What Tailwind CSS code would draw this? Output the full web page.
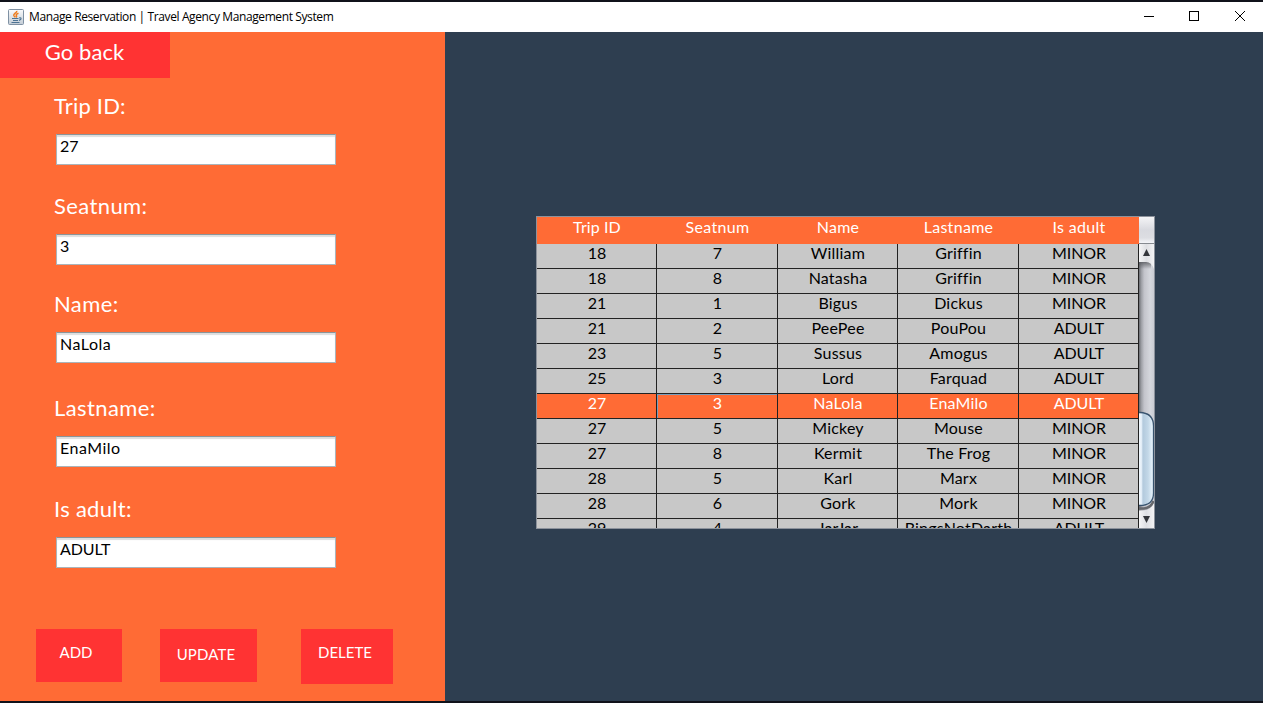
<!DOCTYPE html>
<html lang="en">
<head>
<meta charset="utf-8">
<title>Manage Reservation | Travel Agency Management System</title>
<script src="https://cdn.jsdelivr.net/npm/@tailwindcss/browser@4"></script>
</head>
<body class="w-[1263px] h-[703px] overflow-hidden bg-[#10121a] pt-[2px] font-[Lato,sans-serif] [font-variant-ligatures:none]">
<div class="flex h-[699px] flex-col">
  <header class="flex h-[30px] shrink-0 items-center bg-white text-black">
    <svg class="ml-2 h-4 w-4 shrink-0" viewBox="0 0 16 16">
      <defs><linearGradient id="ic" x1="0" y1="0" x2="0" y2="1"><stop offset="0" stop-color="#fafbfc"/><stop offset="1" stop-color="#c3ccd5"/></linearGradient></defs>
      <rect x=".5" y=".5" width="15" height="15" rx="1" fill="url(#ic)" stroke="#7f91a3"/>
      <path d="M8.800 1.800C9.200 3.800 5 4.600 5.800 6.500Q6.200 7.300 7.300 8.300M10.500 4.300C8 5.200 7.800 6 8.500 6.700Q9 7.500 8 8.500" fill="none" stroke="#ee7d1e" stroke-width="1.500"/>
      <path d="M4 9.500H10.500M5 11.500H10M3.500 13.500H11.500M11 9Q13.800 8.300 12.800 10.300L11 11.500" fill="none" stroke="#4d7393" stroke-width="1.100"/>
    </svg>
    <h1 class="ml-[5px] flex-1 whitespace-nowrap font-['Open_Sans',sans-serif] text-[12px] leading-4 tracking-[-0.39px]">Manage Reservation | Travel Agency Management System</h1>
    <svg class="h-[30px] w-[138px] shrink-0" viewBox="0 0 138 30" fill="none" stroke="#000" shape-rendering="crispEdges">
      <path d="M19 14.500H29"/><rect x="64.500" y="9.500" width="9" height="9"/><path shape-rendering="auto" d="M110 9L120 19M120 9L110 19"/>
    </svg>
  </header>
  <div class="flex min-h-0 flex-1">
    <aside class="flex w-[445px] shrink-0 flex-col bg-[#ff6b35] text-white">
      <button class="h-[46px] w-[170px] shrink-0 bg-[#ff3333] pb-[6px] pr-[1px] text-[22px] leading-[26px] tracking-[0.1px]"><span>Go back</span></button>
      <form class="flex flex-col pl-[54px] text-[22px] leading-[26px] tracking-[0.4px]">
        <label class="mt-[15px] h-[41px] tracking-[0.2px]"><span>Trip ID:</span></label>
        <div class="ml-[2px] h-[31px] w-[280px] border border-[#aab4ba] border-t-[#8a9499] bg-white pl-[3px] text-[16px] leading-[22px] tracking-normal text-black shadow-[inset_0_2px_1px_#dddddd]"><span>27</span></div>
        <label class="mt-[28px] h-[41px]"><span>Seatnum:</span></label>
        <div class="ml-[2px] h-[31px] w-[280px] border border-[#aab4ba] border-t-[#8a9499] bg-white pl-[3px] text-[16px] leading-[22px] tracking-normal text-black shadow-[inset_0_2px_1px_#dddddd]"><span>3</span></div>
        <label class="mt-[26px] h-[41px]"><span>Name:</span></label>
        <div class="ml-[2px] h-[31px] w-[280px] border border-[#aab4ba] border-t-[#8a9499] bg-white pl-[3px] text-[16px] leading-[22px] tracking-[0.5px] text-black shadow-[inset_0_2px_1px_#dddddd]"><span>NaLola</span></div>
        <label class="mt-[32px] h-[41px]"><span>Lastname:</span></label>
        <div class="ml-[2px] h-[31px] w-[280px] border border-[#aab4ba] border-t-[#8a9499] bg-white pl-[3px] text-[16px] leading-[22px] tracking-[0.5px] text-black shadow-[inset_0_2px_1px_#dddddd]"><span>EnaMilo</span></div>
        <label class="mt-[29px] h-[41px] tracking-[0.3px]"><span>Is adult:</span></label>
        <div class="ml-[2px] h-[31px] w-[280px] border border-[#aab4ba] border-t-[#8a9499] bg-white pl-[3px] text-[16px] leading-[22px] tracking-[-0.1px] text-black shadow-[inset_0_2px_1px_#dddddd]"><span>ADULT</span></div>
      </form>
      <div class="mt-[61px] flex items-start pl-9 text-[15px] leading-5">
        <button class="h-[53px] w-[86px] bg-[#ff3333] pb-[7px] pr-[6px]"><span>ADD</span></button>
        <button class="ml-[38px] h-[53px] w-[97px] bg-[#ff3333] pb-[3px] pr-[5px] tracking-[0.15px]"><span>UPDATE</span></button>
        <button class="ml-[44px] h-[55px] w-[92px] bg-[#ff3333] pb-[9px] pr-[4px]"><span>DELETE</span></button>
      </div>
    </aside>
    <main class="flex-1 bg-[#2e3e50] pl-[91px] pt-[184px]">
      <div class="flex h-[313px] w-[619px] overflow-hidden border border-[#8c929c] text-[16px]">
        <div id="table" class="w-[602px] shrink-0 bg-[#c8c8c8] text-black">
          <div class="grid h-[27px] grid-cols-[120px_121px_120px_121px_120px] bg-[#ff6b35] text-center leading-[20px] tracking-[0.3px] text-white">
            <span class="tracking-[0.1px]">Trip ID</span><span>Seatnum</span><span>Name</span><span>Lastname</span><span>Is adult</span>
          </div>
          <div id="rows"></div>
        </div>
        <svg class="h-[311px] w-[15px] shrink-0" viewBox="0 0 15 311">
          <defs>
            <linearGradient id="hd" x1="0" y1="0" x2="0" y2="1"><stop offset="0" stop-color="#f4f4f6"/><stop offset=".5" stop-color="#d8d9df"/><stop offset=".8" stop-color="#dcdde2"/><stop offset="1" stop-color="#f4f5f9"/></linearGradient>
            <linearGradient id="tr"><stop offset="0" stop-color="#6d6f74"/><stop offset=".15" stop-color="#9c9ea4"/><stop offset=".35" stop-color="#c3c4cb"/><stop offset=".75" stop-color="#d5d7dd"/><stop offset="1" stop-color="#caccd3"/></linearGradient>
            <linearGradient id="th"><stop offset="0" stop-color="#f5fafe"/><stop offset=".22" stop-color="#e5eff8"/><stop offset=".32" stop-color="#b3cadd"/><stop offset=".65" stop-color="#c3d8e8"/><stop offset="1" stop-color="#eef8ff"/></linearGradient>
            <linearGradient id="bt"><stop offset="0" stop-color="#f5f5f6"/><stop offset=".5" stop-color="#dedfe3"/><stop offset="1" stop-color="#f3f3f5"/></linearGradient>
            <linearGradient id="sh" x1="0" y1="0" x2="0" y2="1"><stop offset="0" stop-color="#55575c" stop-opacity=".8"/><stop offset="1" stop-color="#55575c" stop-opacity="0"/></linearGradient>
          </defs>
          <rect width="15" height="311" fill="url(#tr)"/>
          <rect width="15" height="26" fill="url(#hd)"/><path d="M0 26.500H15" stroke="#85898f"/>
          <rect y="45" width="12" height="7" fill="url(#sh)"/>
          <path d="M0 27H15V52Q12.500 45 7 45H0Z" fill="url(#bt)"/>
          <path d="M7.500 32L11 39H4Z" fill="#33353a"/>
          <path d="M-1 195.500H1Q14.500 196 14.500 209V276Q14.500 288.500 1 288.500H-1Z" fill="url(#th)" stroke="#38536e" stroke-width="1.300"/>
          <path d="M0 293.500H5Q12 293 15 285V311H0Z" fill="url(#bt)"/>
          <path d="M0 291.500H5Q12 291 14.500 284" fill="none" stroke="#66686d" stroke-width="2.500"/>
          <path d="M4 299H11L7.500 306Z" fill="#33353a"/>
        </svg>
      </div>
    </main>
  </div>
</div>
<template id="row">
  <div class="grid h-[25px] grid-cols-[120px_121px_120px_121px_120px] text-center leading-[18px]"></div>
</template>
<script>
const data = [
  ['18','7','William','Griffin','MINOR'],
  ['18','8','Natasha','Griffin','MINOR'],
  ['21','1','Bigus','Dickus','MINOR'],
  ['21','2','PeePee','PouPou','ADULT'],
  ['23','5','Sussus','Amogus','ADULT'],
  ['25','3','Lord','Farquad','ADULT'],
  ['27','3','NaLola','EnaMilo','ADULT'],
  ['27','5','Mickey','Mouse','MINOR'],
  ['27','8','Kermit','The Frog','MINOR'],
  ['28','5','Karl','Marx','MINOR'],
  ['28','6','Gork','Mork','MINOR'],
  ['29','4','JarJar','BingsNotDarth','ADULT']
];
const host = document.getElementById('rows');
data.forEach((cells, r) => {
  const row = document.getElementById('row').content.firstElementChild.cloneNode(true);
  if (r === 6) row.classList.add('bg-[#ff6b35]', 'text-white');
  cells.forEach((text, c) => {
    const cell = document.createElement('span');
    cell.className = 'border-r border-b border-[#222222] whitespace-nowrap pl-px';
    if (c === 2 || c === 3) cell.classList.add('tracking-[0.2px]');
    if (c === 4) cell.classList.add('tracking-[-0.1px]');
    if (r === 6 && c === 1) cell.classList.add('shadow-[inset_1px_1px_0_#7a9ebd]');
    cell.textContent = text;
    row.append(cell);
  });
  host.append(row);
});
</script>
</body>
</html>
